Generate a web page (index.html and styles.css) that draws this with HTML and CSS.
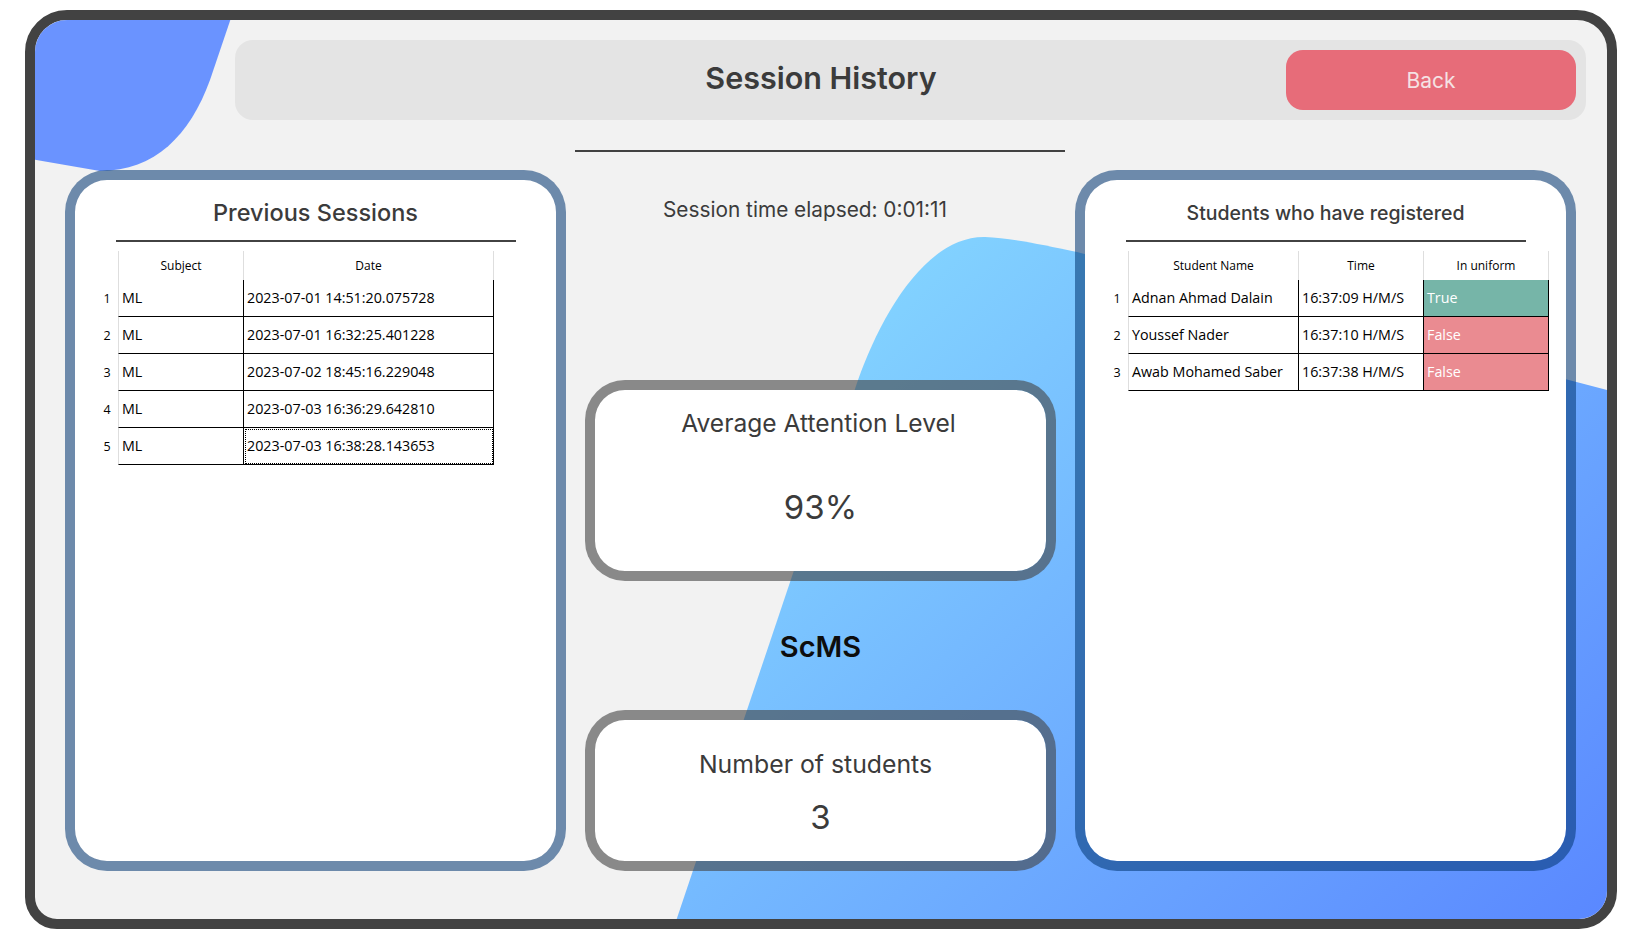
FILE: index.html
```html
<!DOCTYPE html>
<html lang="en">
<head>
<meta charset="utf-8">
<title>Session History</title>
<link rel="stylesheet" href="styles.css">
</head>
<body>
<div class="frame">
  <svg class="backdrop" viewBox="35 20 1572 899" preserveAspectRatio="none" aria-hidden="true">
    <defs>
      <linearGradient id="blobGrad" gradientUnits="userSpaceOnUse" x1="950" y1="230" x2="1600" y2="920">
        <stop offset="0" stop-color="#82d2ff"/>
        <stop offset="1" stop-color="#5a88ff"/>
      </linearGradient>
    </defs>
    <path d="M 30 15 L 232 15 L 210 80 C 190 135 155 171 100 171 L 30 159 Z" fill="#6a93ff"/>
    <path d="M 673 930 L 858 380 C 880 318 925 236 985 237 C 1010 238 1040 244 1077 252 L 1615 392 L 1615 930 Z" fill="url(#blobGrad)"/>
  </svg>

  <header class="topbar">
    <h1 class="page-title">Session History</h1>
    <button class="back-btn" type="button">Back</button>
  </header>

  <div class="divider"></div>

  <main class="content">
    <section class="panel">
      <h2 class="panel-title">Previous Sessions</h2>
      <div class="rule"></div>
      <div class="qtable sessions">
        <div class="corner"></div><div class="th first">Subject</div><div class="th">Date</div>
        <div class="rn">1</div><div class="td first">ML</div><div class="td">2023-07-01 14:51:20.075728</div>
        <div class="rn">2</div><div class="td first">ML</div><div class="td">2023-07-01 16:32:25.401228</div>
        <div class="rn">3</div><div class="td first">ML</div><div class="td">2023-07-02 18:45:16.229048</div>
        <div class="rn">4</div><div class="td first">ML</div><div class="td">2023-07-03 16:36:29.642810</div>
        <div class="rn">5</div><div class="td first">ML</div><div class="td selected">2023-07-03 16:38:28.143653</div>
      </div>
    </section>

    <section class="middle">
      <p class="elapsed">Session time elapsed: 0:01:11</p>
      <div class="stat-card attention">
        <div class="stat-label">Average Attention Level</div>
        <div class="stat-value">93%</div>
      </div>
      <div class="brand">ScMS</div>
      <div class="stat-card count">
        <div class="stat-label">Number of students</div>
        <div class="stat-value">3</div>
      </div>
    </section>

    <section class="panel">
      <h2 class="panel-title small">Students who have registered</h2>
      <div class="rule"></div>
      <div class="qtable students">
        <div class="corner"></div><div class="th first">Student Name</div><div class="th">Time</div><div class="th">In uniform</div>
        <div class="rn">1</div><div class="td first">Adnan Ahmad Dalain</div><div class="td">16:37:09 H/M/S</div><div class="td yes">True</div>
        <div class="rn">2</div><div class="td first">Youssef Nader</div><div class="td">16:37:10 H/M/S</div><div class="td no">False</div>
        <div class="rn">3</div><div class="td first">Awab Mohamed Saber</div><div class="td">16:37:38 H/M/S</div><div class="td no">False</div>
      </div>
    </section>
  </main>
</div>
</body>
</html>
```

FILE: styles.css
```css
* {
  box-sizing: border-box;
}

html, body {
  margin: 0;
  padding: 0;
  background: #ffffff;
}

body {
  width: 1642px;
  height: 940px;
  font-family: "Inter", "Noto Sans", sans-serif;
}

.frame {
  position: relative;
  margin: 10px 0 0 25px;
  width: 1592px;
  height: 919px;
  border: 10px solid #424242;
  border-radius: 42px 40px 38px 32px;
  background: #f2f2f2;
  overflow: hidden;
  display: flex;
  flex-direction: column;
}

.backdrop {
  position: absolute;
  left: 0;
  top: 0;
  width: 100%;
  height: 100%;
  z-index: 0;
}

.topbar,
.divider,
.content {
  position: relative;
  z-index: 1;
}

/* ---------- header ---------- */
.topbar {
  margin: 20px 21px 0 200px;
  height: 80px;
  padding: 10px;
  display: flex;
  align-items: flex-start;
  background: #e4e4e4;
  border-radius: 18px;
}

.page-title {
  flex: 1;
  margin: 0;
  padding-left: 111px;
  text-align: center;
  font-family: "Inter", sans-serif;
  font-weight: 600;
  font-size: 30.5px;
  line-height: 55px;
  color: #3b3b3b;
}

.back-btn {
  width: 290px;
  height: 60px;
  border: none;
  border-radius: 17px;
  background: #e76c79;
  color: #f5e2e4;
  font-family: "Inter", sans-serif;
  font-size: 21px;
  font-weight: 400;
  padding: 0;
}

.divider {
  margin: 30px 0 0 540px;
  width: 490px;
  height: 2px;
  background: #424242;
}

/* ---------- main grid ---------- */
.content {
  margin: 18px 0 0 30px;
  display: grid;
  grid-template-columns: 501px 509px 501px;
  height: 701px;
}

.panel {
  border: 10px solid rgba(0, 53, 113, 0.55);
  border-radius: 42px;
  background: #ffffff;
  background-clip: padding-box;
  padding-top: 19px;
}

.panel-title {
  margin: 0;
  text-align: center;
  font-family: "Inter", sans-serif;
  font-weight: 500;
  font-size: 23.5px;
  line-height: 28px;
  color: #3b3b3b;
}

.panel-title.small {
  font-size: 19.5px;
}

.rule {
  margin: 13px auto 0;
  width: 400px;
  height: 2px;
  background: #424242;
}

/* ---------- Qt-like tables ---------- */
.qtable {
  margin: 9px 0 0 21px;
  display: grid;
  font-family: "Open Sans", "Noto Sans", sans-serif;
  color: #000;
}

.sessions {
  grid-template-columns: 22px 126px 250px;
}

.students {
  grid-template-columns: 22px 171px 125px 125px;
}

.th {
  height: 29px;
  line-height: 29px;
  text-align: center;
  font-size: 12px;
  border-right: 1px solid #dedede;
}

.th.first {
  border-left: 1px solid #dedede;
}

.rn {
  height: 37px;
  line-height: 37px;
  text-align: center;
  font-size: 12.5px;
}

.td {
  height: 37px;
  line-height: 36px;
  padding-left: 3px;
  font-size: 14.3px;
  white-space: nowrap;
  overflow: hidden;
  border-bottom: 1px solid #000;
  border-right: 1px solid #000;
}

.td.first {
  border-left: 1px solid #dedede;
}

.td.selected {
  outline: 1px dotted #000;
  outline-offset: -2px;
}

.td.yes {
  background: #76b5a8;
  color: #ffffff;
}

.td.no {
  background: #ea8b91;
  color: #ffffff;
}

/* ---------- middle column ---------- */
.middle {
  display: flex;
  flex-direction: column;
  align-items: center;
}

.elapsed {
  margin: 28px 0 0;
  padding-right: 31px;
  font-family: "Inter", sans-serif;
  font-size: 20.8px;
  line-height: 24px;
  color: #3b3b3b;
}

.stat-card {
  width: 471px;
  border: 10px solid rgba(66, 66, 66, 0.6);
  border-radius: 40px;
  background: #ffffff;
  background-clip: padding-box;
  text-align: center;
  color: #3b3b3b;
}

.stat-card.attention {
  margin-top: 158px;
  height: 201px;
  padding-top: 18px;
  padding-right: 4px;
}

.stat-card.attention .stat-label {
  font-size: 24.6px;
}

.stat-card.attention .stat-value {
  margin-top: 49px;
  padding-left: 4px;
}

.stat-card.count {
  margin-top: 45px;
  height: 161px;
  padding-top: 29px;
}

.stat-card.count .stat-label {
  font-size: 24.8px;
  padding-right: 10px;
}

.stat-card.count .stat-value {
  margin-top: 18px;
}

.stat-label {
  font-size: 24px;
  line-height: 30px;
  font-weight: 400;
}

.stat-value {
  font-size: 33px;
  line-height: 40px;
  font-weight: 400;
}

.brand {
  margin-top: 48px;
  font-family: "Inter", sans-serif;
  font-weight: 600;
  font-size: 29px;
  line-height: 36px;
  color: #0d0d0d;
}
```
